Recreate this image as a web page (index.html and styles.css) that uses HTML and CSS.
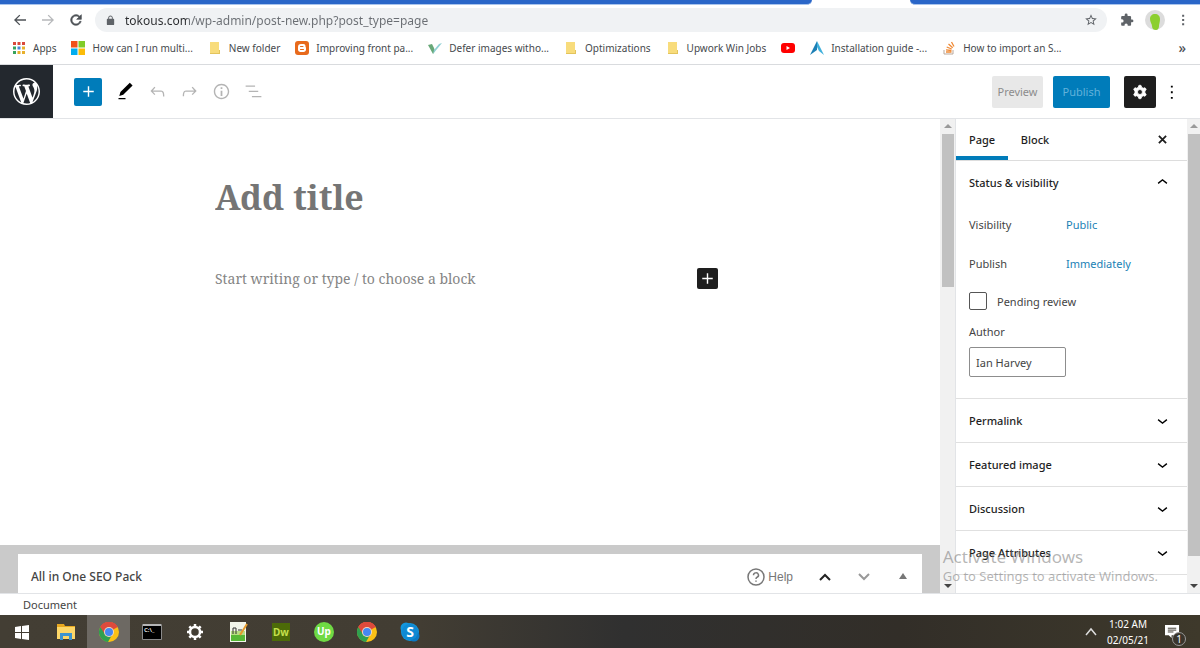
FILE: index.html
```
<!DOCTYPE html>
<html lang="en">
<head>
    <meta charset="UTF-8">
    <meta name="viewport" content="width=device-width, initial-scale=1.0">
    <title>Add New Page</title>
    <link rel="stylesheet" href="styles.css">
</head>
<body>
    <!-- Icons used more than once -->
    <svg class="sprite" aria-hidden="true">
        <symbol id="plus" viewBox="0 0 24 24"><path d="M18 11.2h-5.2V6h-1.6v5.2H6v1.6h5.2V18h1.6v-5.2H18z"/></symbol>
        <symbol id="down" viewBox="0 0 24 24"><path d="M17.5 11.6L12 16l-5.5-4.4.9-1.2L12 14l4.5-3.6 1 1.2z"/></symbol>
        <symbol id="up" viewBox="0 0 24 24"><path d="M6.5 12.4L12 8l5.5 4.4-.9 1.2L12 10l-4.5 3.6-1-1.2z"/></symbol>
        <symbol id="dots" viewBox="0 0 24 24"><path d="M10.500 3h3.500v3.500h-3.500zM10.500 10.300h3.500v3.500h-3.500zM10.500 17.600h3.500v3.500h-3.500z"/></symbol>
        <symbol id="folder" viewBox="0 0 14 14"><path fill="#f8dc7c" d="M2 1h9v9h1v3H2z"/><path fill="#e3c45c" d="M2 12h10v1H2zM11 9h1v3h-1z"/></symbol>
        <symbol id="chrome" viewBox="0 0 20 20">
            <circle cx="10" cy="10" r="10" fill="#fbc116"/>
            <path fill="#de4a3c" d="M10 10 1.300 5A10 10 0 0 1 18.700 5z"/>
            <path fill="#2fa04f" d="M10 10 1.300 5a10 10 0 0 0 7.700 15l4.500-8z"/>
            <path fill="#de4a3c" d="M10 5h8.700A10 10 0 0 0 1.300 5l4.500 7z"/>
            <circle cx="10" cy="10" r="5" fill="#f3d9c0"/>
            <circle cx="10" cy="10" r="4" fill="#4688f1"/>
        </symbol>
    </svg>

    <div class="tab-strip">
        <div class="tabs-before"></div>
        <div class="tabs-after"></div>
    </div>

    <div class="toolbar">
        <button class="nav-btn" aria-label="Back"><svg viewBox="0 0 24 24"><path d="M21 11H6.830l5.590-5.590L11 4l-8 8 8 8 1.410-1.410L6.830 13H21z"/></svg></button>
        <button class="nav-btn faded" aria-label="Forward"><svg viewBox="0 0 24 24"><path d="M3 11h14.170l-5.590-5.590L13 4l8 8-8 8-1.410-1.410L17.170 13H3z"/></svg></button>
        <button class="nav-btn" aria-label="Reload"><svg viewBox="0 0 24 24"><path d="M17.650 6.350C16.200 4.900 14.210 4 12 4c-4.420 0-7.990 3.580-7.990 8s3.570 8 7.990 8c3.730 0 6.840-2.550 7.730-6h-2.080c-.82 2.330-3.040 4-5.650 4-3.310 0-6-2.690-6-6s2.690-6 6-6c1.660 0 3.140.69 4.220 1.780L13 11h7V4l-2.350 2.350z" stroke="#4d5156"/></svg></button>
        <div class="omnibox">
            <svg class="lock" viewBox="0 0 24 24"><path d="M18 8h-1V6c0-2.760-2.240-5-5-5S7 3.240 7 6v2H6c-1.100 0-2 .9-2 2v10c0 1.100.9 2 2 2h12c1.100 0 2-.9 2-2V10c0-1.100-.9-2-2-2zM9 8V6a3 3 0 0 1 6 0v2z"/></svg>
            <input class="url" type="text" aria-label="Address" value="tokous.com/wp-admin/post-new.php?post_type=page">
            <svg class="star" viewBox="0 0 24 24"><path d="M22 9.240l-7.190-.62L12 2 9.190 8.630 2 9.240l5.460 4.730L5.820 21 12 17.270 18.180 21l-1.630-7.030L22 9.240zM12 15.400l-3.760 2.270 1-4.280-3.320-2.880 4.380-.38L12 6.100l1.710 4.040 4.380.38-3.320 2.880 1 4.280L12 15.400z"/></svg>
        </div>
        <button class="tool-btn" aria-label="Extensions"><svg viewBox="0 0 24 24"><path d="M20.500 11H19V7c0-1.100-.9-2-2-2h-4V3.500a2.500 2.500 0 0 0-5 0V5H4c-1.100 0-2 .9-2 2v3.800h1.500a2.700 2.700 0 0 1 0 5.400H2V20c0 1.100.9 2 2 2h3.800v-1.500a2.700 2.700 0 0 1 5.400 0V22H17c1.100 0 2-.9 2-2v-4h1.500a2.500 2.500 0 0 0 0-5z"/></svg></button>
        <button class="tool-btn avatar" aria-label="Profile"><svg viewBox="0 0 20 20"><circle cx="10" cy="10" r="10" fill="#dcdcdc"/><path fill="#8ccf2f" d="M5 9c0-3 2-5 5-5s5 2 5 5c0 3-1 5-1 7 0 2-1 4-3 4s-4-1-4-4c0-2-2-4-2-7z"/></svg></button>
        <button class="tool-btn" aria-label="Menu"><svg viewBox="0 0 24 24"><use href="#dots"/></svg></button>
    </div>

    <nav class="bookmarks">
        <a href="#"><svg viewBox="0 0 14 14"><path fill="#d9483b" d="M1 1h3v3H1zM5.500 1h3v3h-3zM10 1h3v3h-3z"/><path fill="#36a35c" d="M1 5.500h3v3H1z"/><path fill="#4a86d8" d="M5.500 5.500h3v3h-3z"/><path fill="#e8b02c" d="M10 5.500h3v3h-3zM5.500 10h3v3h-3zM10 10h3v3h-3z"/><path fill="#36a35c" d="M1 10h3v3H1z"/></svg>Apps</a>
        <a href="#"><svg viewBox="0 0 14 14"><path fill="#f1511b" d="M0 0h6.500v6.500H0z"/><path fill="#80cc28" d="M7.500 0H14v6.500H7.500z"/><path fill="#00adef" d="M0 7.500h6.500V14H0z"/><path fill="#fbbc09" d="M7.500 7.500H14V14H7.500z"/></svg>How can I run multi...</a>
        <a href="#"><svg><use href="#folder"/></svg>New folder</a>
        <a href="#"><svg viewBox="0 0 14 14"><rect width="14" height="14" rx="3" fill="#e86a1c"/><path fill="#fff" d="M6 3h2.500C10 3 10.500 4 10.500 5.500c0 .7.500.7.500 1.300v1.700C11 10 10 11 8.500 11h-3C4 11 3 10 3 8.500V6c0-2 1-3 3-3z"/><path stroke="#e86a1c" stroke-linecap="round" d="M5.500 5.500H8M5.500 8.500h3"/></svg>Improving front pa...</a>
        <a href="#"><svg viewBox="0 0 14 14"><path fill="#68a878" d="M0 4l4-1 2 4 1 3-2 3z"/><path fill="#8fd0d4" d="M5 13l1-4 5-6 3-1z"/></svg>Defer images witho...</a>
        <a href="#"><svg><use href="#folder"/></svg>Optimizations</a>
        <a href="#"><svg><use href="#folder"/></svg>Upwork Win Jobs</a>
        <a href="#" aria-label="YouTube"><svg viewBox="0 0 14 14"><rect y="2" width="14" height="10" rx="3" fill="#f00"/><path fill="#fff" d="M5.500 5v4L9 7z"/></svg></a>
        <a href="#"><svg viewBox="0 0 14 14"><path fill="#1c7fb5" d="M7 0L0 14l7-5z"/><path fill="#3fb0dc" d="M7 0l7 14-5-4-2-4z"/></svg>Installation guide -...</a>
        <a href="#"><svg viewBox="0 0 14 14"><path fill="none" stroke="#b9a79a" d="M2 9v4h9V9"/><path fill="none" stroke="#f08a35" stroke-width="1.300" d="M4 11h5.500M4 8.800l5.500.7M4.700 6l5 2M6.500 3l4.200 3.700M9.500 1l2.500 4.500"/></svg>How to import an S...</a>
        <button class="overflow-btn" aria-label="More bookmarks">»</button>
    </nav>

    <header class="editor-header">
        <a class="wp-logo" href="#" aria-label="View Pages"><svg viewBox="0 0 20 20"><path d="M20 10c0-5.510-4.490-10-10-10C4.480 0 0 4.490 0 10c0 5.520 4.480 10 10 10 5.510 0 10-4.480 10-10zM7.780 15.370L4.370 6.220c.55-.02 1.170-.08 1.170-.08.5-.06.44-1.130-.06-1.110 0 0-1.450.11-2.370.11-.18 0-.37 0-.58-.01C4.120 2.690 6.870 1.110 10 1.110c2.330 0 4.450.87 6.050 2.340-.68-.11-1.650.39-1.650 1.580 0 .74.45 1.360.9 2.100.35.61.55 1.360.55 2.460 0 1.490-1.400 5-1.400 5l-3.030-8.370c.54-.02.82-.17.82-.17.5-.05.44-1.250-.06-1.220 0 0-1.440.12-2.380.12-.87 0-2.330-.12-2.330-.12-.5-.03-.56 1.200-.06 1.220l.92.08 1.260 3.410zM17.410 10c.24-.64.74-1.870.43-4.250.7 1.290 1.050 2.710 1.050 4.250 0 3.290-1.730 6.240-4.400 7.780.97-2.590 1.940-5.200 2.920-7.780zM6.100 18.090C3.120 16.650 1.110 13.530 1.110 10c0-1.300.23-2.480.72-3.590C3.250 10.300 4.670 14.200 6.100 18.090zm4.030-6.630l2.580 6.980c-.86.29-1.760.45-2.710.45-.79 0-1.570-.11-2.290-.33.81-2.380 1.620-4.740 2.420-7.100z"/></svg></a>
        <div class="header-tools">
            <button class="add-btn" aria-label="Add block"><svg><use href="#plus"/></svg></button>
            <button class="icon-btn" aria-label="Tools"><svg viewBox="0 0 24 24"><path d="M20.100 5.100L16.900 2 6.200 12.700l-1.300 4.400 4.500-1.300L20.100 5.100zM4 20.800h8v-1.500H4v1.500z"/></svg></button>
            <button class="icon-btn" aria-label="Undo" disabled><svg viewBox="0 0 24 24"><path d="M18.300 11.700c-.6-.6-1.400-.9-2.300-.9H6.700l2.900-3.300-1.100-1-4.500 5L8.500 16l1-1-2.700-2.700H16c.5 0 .9.2 1.300.5 1 1 1 3.400 1 4.500v.3h1.500v-.2c0-1.500 0-4.300-1.500-5.700z"/></svg></button>
            <button class="icon-btn" aria-label="Redo" disabled><svg viewBox="0 0 24 24"><path d="M15.600 6.500l-1.100 1 2.900 3.300H8c-.9 0-1.700.3-2.300.9-1.400 1.500-1.400 4.200-1.400 5.600v.2h1.500v-.3c0-1.100 0-3.500 1-4.500.3-.3.7-.5 1.300-.5h9.200L14.500 15l1.100 1.100 4.600-4.600-4.600-5z"/></svg></button>
            <button class="icon-btn" aria-label="Details" disabled><svg viewBox="0 0 24 24"><path d="M12 3.200c-4.800 0-8.800 3.900-8.800 8.800 0 4.800 3.900 8.800 8.800 8.800 4.800 0 8.800-3.900 8.800-8.800 0-4.800-4-8.800-8.800-8.800zm0 16c-4 0-7.200-3.300-7.200-7.200C4.800 8 8 4.800 12 4.800s7.200 3.300 7.200 7.200c0 4-3.200 7.200-7.200 7.200zM11 17h2v-6h-2v6zm0-8h2V7h-2v2z"/></svg></button>
            <button class="icon-btn" aria-label="Outline" disabled><svg viewBox="0 0 24 24"><path d="M13.800 5.200H3v1.500h10.800V5.200zm-3.600 12v1.500H21v-1.500H10.200zm7.200-6H6.600v1.500h10.800v-1.500z"/></svg></button>
        </div>
        <div class="header-settings">
            <button class="preview-btn" disabled>Preview</button>
            <button class="publish-btn" disabled>Publish</button>
            <button class="settings-btn" aria-label="Settings"><svg viewBox="0 0 24 24"><path fill-rule="evenodd" stroke="#fff" d="M10.289 4.836A1 1 0 0111.275 4h1.306a1 1 0 01.987.836l.244 1.466c.787.26 1.503.679 2.108 1.218l1.393-.522a1 1 0 011.216.437l.653 1.130a1 1 0 01-.23 1.273l-1.148.944a6.025 6.025 0 010 2.435l1.149.946a1 1 0 01.23 1.272l-.653 1.130a1 1 0 01-1.216.437l-1.394-.522c-.605.54-1.320.958-2.108 1.218l-.244 1.466a1 1 0 01-.987.836h-1.306a1 1 0 01-.986-.836l-.244-1.466a5.995 5.995 0 01-2.108-1.218l-1.394.522a1 1 0 01-1.217-.436l-.653-1.131a1 1 0 01.23-1.272l1.149-.946a6.026 6.026 0 010-2.435l-1.148-.944a1 1 0 01-.23-1.272l.653-1.131a1 1 0 011.217-.437l1.393.522a5.994 5.994 0 012.108-1.218l.244-1.466zM14.929 12a3 3 0 11-6 0 3 3 0 016 0z"/></svg></button>
            <button class="more-btn" aria-label="Options"><svg viewBox="0 0 24 24"><path d="M13 21h-2.500v-2.500H13zm0-7.500h-2.500V11H13zm0-7.500h-2.500V3.500H13z"/></svg></button>
        </div>
    </header>

    <div class="workspace">
        <main class="canvas">
            <div class="post">
                <input class="post-title" type="text" aria-label="Add title" placeholder="Add title">
                <div class="block-row">
                    <input class="block-text" type="text" aria-label="Block" placeholder="Start writing or type / to choose a block">
                    <button class="inserter" aria-label="Add block"><svg><use href="#plus"/></svg></button>
                </div>
            </div>
            <div class="metaboxes">
                <section class="metabox">
                    <h2>All in One SEO Pack</h2>
                    <a class="help" href="#"><svg viewBox="0 0 18 18"><circle cx="9" cy="9" r="8"/><path d="M6.500 7.200a2.500 2.300 0 1 1 3.600 2C9.200 9.700 9 10 9 11M9 12.500v1.300"/></svg>Help</a>
                    <button class="move-btn" aria-label="Move up"><svg viewBox="0 0 12 12"><path d="M1 9l5-5 5 5"/></svg></button>
                    <button class="move-btn lower" aria-label="Move down"><svg viewBox="0 0 12 12"><path d="M1 3l5 5 5-5"/></svg></button>
                    <button class="toggle-btn" aria-label="Toggle panel"><svg viewBox="0 0 12 12"><path d="M6 2l4 6H2z"/></svg></button>
                </section>
            </div>
        </main>
        <div class="scrollbar">
            <span class="arrow arrow-up"></span>
            <span class="thumb thumb-short"></span>
            <span class="arrow arrow-down"></span>
        </div>

        <aside class="sidebar">
            <div class="sidebar-tabs">
                <button class="tab selected">Page</button>
                <button class="tab">Block</button>
                <button class="close-btn" aria-label="Close settings"><svg viewBox="0 0 10 10"><path d="M1 1l8 8M9 1L1 9"/></svg></button>
            </div>
            <section class="panel">
                <button class="panel-title">Status &amp; visibility<svg><use href="#up"/></svg></button>
                <div class="panel-body">
                    <div class="row"><span>Visibility</span><a href="#">Public</a></div>
                    <div class="row"><span>Publish</span><a href="#">Immediately</a></div>
                    <label class="check"><input type="checkbox">Pending review</label>
                    <label class="author-label" for="author">Author</label>
                    <select id="author"><option>Ian Harvey</option></select>
                </div>
            </section>
            <section class="panel"><button class="panel-title">Permalink<svg><use href="#down"/></svg></button></section>
            <section class="panel"><button class="panel-title">Featured image<svg><use href="#down"/></svg></button></section>
            <section class="panel"><button class="panel-title">Discussion<svg><use href="#down"/></svg></button></section>
            <section class="panel"><button class="panel-title">Page Attributes<svg><use href="#down"/></svg></button></section>
        </aside>
        <div class="scrollbar outer">
            <span class="arrow arrow-up"></span>
            <span class="thumb thumb-long"></span>
            <span class="arrow arrow-down"></span>
        </div>

        <div class="watermark">
            <p class="watermark-title">Activate Windows</p>
            <p>Go to Settings to activate Windows.</p>
        </div>
    </div>

    <footer class="breadcrumb">Document</footer>

    <div class="taskbar">
        <button class="task" aria-label="Start"><svg viewBox="0 0 20 20"><path fill="#fff" d="M2 5l6-1v6H2zM9 3.900L16 3v7H9zM2 11h6v6l-6-1zM9 11h7v7l-7-1z"/></svg></button>
        <button class="task" aria-label="File Explorer"><svg viewBox="0 0 20 20"><path fill="#e8a820" d="M1 2h7l1 2h10v13H1z"/><path fill="#fdd768" d="M1 5h18v12H1z"/><path fill="#3d94cf" d="M4 11h12v7h-3v-4H7v4H4z"/></svg></button>
        <button class="task current" aria-label="Chrome"><svg><use href="#chrome"/></svg></button>
        <button class="task" aria-label="Command Prompt"><svg viewBox="0 0 20 20"><path fill="#000" stroke="#8a8a8a" d="M.5 2.500h19v15H.5z"/><path fill="#b5b5b5" d="M1 2h18v2H1z"/><text x="2" y="10" class="cmd-text">C:\_</text></svg></button>
        <button class="task" aria-label="Settings"><svg viewBox="0 0 20 20"><circle cx="10" cy="10" r="5" fill="none" stroke="#fff" stroke-width="2.500"/><path stroke="#fff" stroke-width="2.500" d="M10 2v3M10 15v3M2 10h3M15 10h3M4.300 4.300l2.200 2.200M13.500 13.500l2.200 2.200M15.700 4.300l-2.200 2.200M6.500 13.500l-2.200 2.200"/></svg></button>
        <button class="task" aria-label="Notepad++"><svg viewBox="0 0 20 20"><path fill="#f2f5ea" d="M2 0h16v20H2z"/><path fill="#57b836" d="M3 11h14v8H3z"/><path fill="#b7dd82" d="M3 9h14v4H3z"/><path stroke="#333" fill="none" d="M5 12V6h3v6M10 8h4"/><path stroke="#e59a2d" stroke-width="2" d="M19 2l-7 11"/></svg></button>
        <button class="task" aria-label="Dreamweaver"><svg viewBox="0 0 20 20"><rect x="1" y="1" width="18" height="18" fill="#4c6b08"/><text x="10" y="14" class="dw-text">Dw</text></svg></button>
        <button class="task" aria-label="Upwork"><svg viewBox="0 0 20 20"><circle cx="10" cy="10" r="10" fill="#6fda44"/><text x="10" y="13" class="up-text">Up</text></svg></button>
        <button class="task" aria-label="Chrome profile"><svg><use href="#chrome"/></svg></button>
        <button class="task" aria-label="Skype"><svg viewBox="0 0 20 20"><circle cx="10" cy="10" r="9" fill="#1296dc"/><circle cx="6" cy="6" r="5.500" fill="#1296dc"/><circle cx="14" cy="14" r="5.500" fill="#0a79c4"/><circle cx="10" cy="10" r="8" fill="#0f8ad3"/><text x="10" y="15" class="skype-text">S</text></svg></button>
        <div class="tray">
            <button class="tray-btn" aria-label="Show hidden icons"><svg viewBox="0 0 12 12"><path d="M1 9l5-6 5 6"/></svg></button>
            <div class="clock"><span>1:02 AM</span><span>02/05/21</span></div>
            <button class="notify" aria-label="Notifications"><svg viewBox="0 0 16 16"><path fill="#fff" d="M0 1h15v11H7v3l-3-3H0z"/><path stroke="#3a352c" d="M3 4.500h9M3 6.500h9M3 8.500h6"/></svg><span class="badge">1</span></button>
        </div>
    </div>
</body>
</html>
```
FILE: styles.css
```
/* General Styling */
* {
    box-sizing: border-box;
}

body {
    margin: 0;
    height: 100vh;
    display: flex;
    flex-direction: column;
    overflow: hidden;
    font-family: "Segoe UI", "Noto Sans", "Open Sans", sans-serif;
    font-size: 11px;
    color: #1e1e1e;
    background: #fff;
}

button,
input,
select {
    font: inherit;
    color: inherit;
    margin: 0;
    padding: 0;
    border: 0;
    background: none;
}

button {
    display: flex;
    align-items: center;
    justify-content: center;
    flex-shrink: 0;
}

a {
    text-decoration: none;
}

svg {
    display: block;
    flex-shrink: 0;
}

.sprite {
    display: none;
}

/* Browser */
.tab-strip {
    display: flex;
    justify-content: space-between;
    height: 5px;
    flex-shrink: 0;
}

.tabs-before,
.tabs-after {
    background: #2a66c8;
    border-bottom: 1px solid #a9c4ec;
}

.tabs-before {
    width: 67.7%;
    border-bottom-right-radius: 5px;
}

.tabs-after {
    width: 24.2%;
    border-bottom-left-radius: 5px;
}

.toolbar {
    display: flex;
    align-items: center;
    flex-shrink: 0;
    height: 30px;
    padding: 0 3px 0 6px;
}

.nav-btn {
    width: 28px;
    height: 24px;
    fill: #4d5156;
}

.nav-btn svg {
    width: 16px;
    height: 16px;
}

.faded {
    fill: #b6b8ba;
}

.omnibox {
    flex: 1;
    display: flex;
    align-items: center;
    height: 24px;
    margin: 0 6px 0 5px;
    padding: 0 9px 0 10px;
    border-radius: 12px;
    background: #f0f2f4;
    fill: #5f6368;
}

.lock {
    width: 11px;
    height: 11px;
}

.url {
    flex: 1;
    height: 24px;
    margin-left: 9px;
    font-size: 12px;
    color: transparent;
    background: linear-gradient(90deg, #2b2d30 62px, #6a6e73 62px);
    -webkit-background-clip: text;
    background-clip: text;
}

.star {
    width: 14px;
    height: 14px;
}

.tool-btn {
    width: 28px;
    height: 24px;
    fill: #5f6368;
}

.tool-btn svg {
    width: 14px;
    height: 14px;
}

.avatar svg {
    width: 20px;
    height: 20px;
}

.bookmarks {
    display: flex;
    align-items: center;
    flex-shrink: 0;
    gap: 15px;
    height: 30px;
    padding: 0 14px 4px 12px;
    font-size: 10px;
    white-space: nowrap;
    border-bottom: 1px solid #d9dbde;
}

.bookmarks a {
    display: flex;
    align-items: center;
    gap: 7px;
    color: #46494d;
}

.bookmarks svg {
    width: 14px;
    height: 14px;
}

.overflow-btn {
    margin-left: auto;
    font-size: 14px;
    font-weight: 500;
    color: #4d5156;
}

/* Editor header */
.editor-header {
    display: flex;
    align-items: center;
    justify-content: space-between;
    flex-shrink: 0;
    height: 54px;
    border-bottom: 1px solid #e2e4e7;
}

.wp-logo {
    display: flex;
    align-items: center;
    justify-content: center;
    width: 53px;
    height: 53px;
    background: #23282e;
    fill: #fff;
}

.wp-logo svg {
    width: 27px;
    height: 27px;
}

.header-tools {
    flex: 1;
    display: flex;
    align-items: center;
    padding-left: 21px;
}

.add-btn {
    width: 28px;
    height: 28px;
    margin-right: 7px;
    border-radius: 2px;
    background: #007cba;
    fill: #fff;
}

.add-btn svg,
.icon-btn svg {
    width: 21px;
    height: 21px;
}

.icon-btn {
    width: 32px;
    height: 32px;
}

.icon-btn:disabled {
    fill: #b4b4b4;
}

.header-settings {
    display: flex;
    align-items: center;
    padding-right: 16px;
}

.preview-btn,
.publish-btn {
    height: 32px;
    border-radius: 2px;
}

.preview-btn {
    width: 51px;
    margin-right: 10px;
    background: #e8e8e8;
    color: #8c8c8c;
}

.publish-btn {
    width: 57px;
    margin-right: 14px;
    background: #007cba;
    color: #62b2da;
}

.settings-btn {
    width: 32px;
    height: 32px;
    border-radius: 2px;
    background: #1e1e1e;
    fill: #fff;
}

.settings-btn svg {
    width: 20px;
    height: 20px;
}

.more-btn {
    width: 28px;
    height: 32px;
    margin-left: 2px;
    margin-right: -2px;
}

.more-btn svg {
    width: 18px;
    height: 18px;
}

/* Canvas */
.workspace {
    position: relative;
    flex: 1;
    display: flex;
    min-height: 0;
}

.canvas {
    flex: 1;
    display: flex;
    flex-direction: column;
    min-width: 0;
}

.post {
    flex: 1;
    width: 510px;
    max-width: 100%;
    margin: 0 auto;
    padding-top: 51px;
    font-family: "Noto Serif", "Liberation Serif", serif;
}

.post-title {
    width: 100%;
    height: 54px;
    font-size: 34px;
    font-weight: bold;
}

.block-row {
    display: flex;
    align-items: center;
    margin: 43px 7px 0 0;
}

.block-text {
    flex: 1;
    height: 22px;
    font-size: 14px;
}

.post-title::placeholder {
    color: #757575;
}

.block-text::placeholder {
    color: #858585;
}

.inserter {
    width: 21px;
    height: 21px;
    border-radius: 2px;
    background: #1e1e1e;
    fill: #fff;
}

.inserter svg {
    width: 21px;
    height: 21px;
}

.metaboxes {
    padding: 9px 18px 0;
    background: #cacaca;
}

.metabox {
    display: flex;
    align-items: center;
    height: 39px;
    padding: 6px 6px 0 13px;
    background: #fff;
}

.metabox h2 {
    flex: 1;
    margin: 0;
    font-size: 12px;
    font-weight: 500;
    color: #444;
}

.help {
    display: flex;
    align-items: center;
    gap: 3px;
    margin-right: 12px;
    font-family: "Liberation Sans", Arial, sans-serif;
    font-size: 12px;
    color: #777;
}

.help svg {
    width: 18px;
    height: 18px;
    fill: none;
    stroke: #777;
    stroke-width: 1.5;
}

.move-btn,
.toggle-btn {
    width: 39px;
    height: 30px;
}

.move-btn svg,
.toggle-btn svg {
    width: 12px;
    height: 12px;
}

.toggle-btn {
    width: 27px;
    margin-left: 6px;
    fill: #777;
}

.move-btn svg {
    fill: none;
    stroke: #222;
    stroke-width: 2;
}

.lower svg {
    stroke: #999;
}

/* Scrollbars */
.scrollbar {
    display: flex;
    flex-direction: column;
    align-items: center;
    width: 15px;
    padding: 5px 0;
    background: #f1f1f1;
}

.outer {
    width: 13px;
}

.arrow {
    border: 4px solid transparent;
}

.arrow-up {
    border-top: 0;
    border-bottom-color: #9a9a9a;
}

.arrow-down {
    margin-top: auto;
    border-bottom: 0;
    border-top-color: #444;
}

.thumb {
    width: 12px;
    margin-top: 6px;
    background: #c1c1c1;
}

.thumb-short {
    height: 33%;
}

.thumb-long {
    height: 91%;
}

/* Sidebar */
.sidebar {
    width: 232px;
    flex-shrink: 0;
    overflow: hidden;
    border-left: 1px solid #e2e4e7;
}

.sidebar-tabs {
    display: flex;
    height: 42px;
    border-bottom: 1px solid #ddd;
}

.tab {
    width: 52px;
    border-bottom: 4px solid transparent;
    padding-top: 4px;
    font-weight: 500;
}

.tab:nth-child(2) {
    width: 54px;
}

.selected {
    border-bottom-color: #007cba;
}

.close-btn {
    width: 50px;
    margin-left: auto;
}

.close-btn svg {
    width: 9px;
    height: 9px;
    stroke: #1e1e1e;
    stroke-width: 2;
}

.panel {
    border-bottom: 1px solid #e0e0e0;
}

.panel-title {
    width: 100%;
    height: 43px;
    justify-content: space-between;
    padding: 0 14px 0 13px;
    font-weight: 500;
}

.panel-title svg {
    width: 21px;
    height: 21px;
}

.panel-body {
    padding: 1px 13px 21px;
    color: #444;
}

.row {
    display: flex;
    align-items: center;
    height: 39px;
}

.row span {
    width: 97px;
}

.row a {
    color: #1a7fb5;
}

.check {
    display: flex;
    align-items: center;
    gap: 10px;
    height: 36px;
}

.check input {
    appearance: none;
    width: 18px;
    height: 18px;
    border: 1px solid #555;
    border-radius: 2px;
}

.author-label {
    display: block;
    height: 26px;
    line-height: 26px;
    margin-bottom: 2px;
}

select {
    display: block;
    appearance: none;
    width: 97px;
    height: 30px;
    padding: 0 6px;
    border: 1px solid #8d8d8d;
    border-radius: 2px;
}

.watermark {
    position: absolute;
    right: 42px;
    bottom: 8px;
    color: rgba(120, 120, 120, 0.55);
    pointer-events: none;
    white-space: nowrap;
}

.watermark p {
    margin: 0;
    font-size: 13px;
    line-height: 17px;
}

.watermark .watermark-title {
    font-size: 17px;
    line-height: 22px;
}

.breadcrumb {
    flex-shrink: 0;
    height: 22px;
    padding-left: 23px;
    line-height: 22px;
    color: #444;
    border-top: 1px solid #e2e4e7;
}

/* Taskbar */
.taskbar {
    display: flex;
    flex-shrink: 0;
    height: 33px;
    padding-left: 1px;
    background: linear-gradient(90deg, #433e34, #423d33 35%, #303030 52%, #322e28 75%, #3e392b);
}

.task {
    width: 43px;
}

.current {
    background: #6d6963;
}

.task svg {
    width: 20px;
    height: 20px;
}

.task text {
    font-weight: bold;
    text-anchor: middle;
}

.task .cmd-text {
    font-size: 6px;
    text-anchor: start;
    fill: #ddd;
}

.dw-text {
    font-size: 10px;
    fill: #c5e04c;
}

.up-text {
    font-size: 10px;
    fill: #fff;
}

.skype-text {
    font-size: 14px;
    fill: #fff;
}

.tray {
    display: flex;
    align-items: center;
    margin-left: auto;
    padding-right: 14px;
    color: #fff;
}

.tray-btn svg {
    width: 12px;
    height: 12px;
    fill: none;
    stroke: #ddd;
    stroke-width: 1.5;
}

.clock {
    display: flex;
    flex-direction: column;
    align-items: center;
    width: 62px;
    font-size: 10px;
    line-height: 16px;
}

.notify {
    position: relative;
    width: 27px;
    height: 30px;
}

.notify svg {
    width: 15px;
    height: 15px;
}

.badge {
    position: absolute;
    right: 0;
    bottom: 1px;
    width: 14px;
    height: 14px;
    border: 1px solid #999;
    border-radius: 50%;
    background: #3a352c;
    font-size: 10px;
    line-height: 12px;
}
```
